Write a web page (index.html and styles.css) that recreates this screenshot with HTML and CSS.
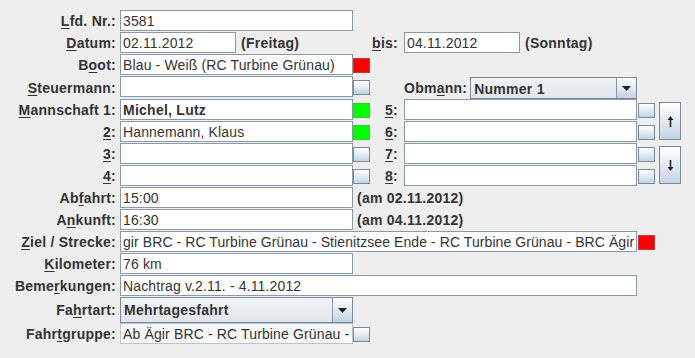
FILE: index.html
```html
<!DOCTYPE html>
<html>
<head>
    <title>Fahrt bearbeiten</title>
    <link rel="stylesheet" href="styles.css">
</head>
<body>
<div class="form">
    <!-- Lfd. Nr. -->
    <label class="lbl c-lbl"><u>L</u>fd. Nr.:</label>
    <div class="field c-main">3581</div>

    <!-- Datum / bis -->
    <label class="lbl c-lbl"><u>D</u>atum:</label>
    <div class="pair c-main">
        <div class="field short">02.11.2012</div>
        <span class="note">(Freitag)</span>
    </div>
    <label class="lbl rlbl c-rlbl"><u>b</u>is:</label>
    <div class="pair c-rest">
        <div class="field short">04.11.2012</div>
        <span class="note">(Sonntag)</span>
    </div>

    <!-- Boot -->
    <label class="lbl c-lbl">B<u>o</u>ot:</label>
    <div class="field c-main">Blau - Weiß (RC Turbine Grünau)</div>
    <span class="mark red c-ind"></span>

    <!-- Steuermann / Obmann -->
    <label class="lbl tall c-lbl"><u>S</u>teuermann:</label>
    <div class="field c-main"></div>
    <button class="sbtn c-ind"></button>
    <div class="pair c-rmain">
        <label class="lbl tall obm">Obm<u>a</u>nn:</label>
        <div class="combo small">
            <span class="combo-text">Nummer 1</span>
            <span class="combo-arrow"><svg width="9" height="5" viewBox="0 0 9 5"><path d="M0 0H9L4.5 5Z" fill="#222"/></svg></span>
        </div>
    </div>

    <!-- Mannschaft -->
    <label class="lbl c-lbl"><u>M</u>annschaft 1:</label>
    <div class="field bold c-main">Michel, Lutz</div>
    <span class="mark green c-ind"></span>
    <label class="lbl rlbl c-rlbl"><u>5</u>:</label>
    <div class="field c-rmain"></div>
    <button class="sbtn c-btn"></button>
    <button class="abtn c-arrow"><svg width="7" height="11" viewBox="0 0 7 11"><path d="M3.5 0L0.5 4H2.7V11H4.3V4H6.5Z" fill="#222"/></svg></button>

    <label class="lbl c-lbl"><u>2</u>:</label>
    <div class="field c-main">Hannemann, Klaus</div>
    <span class="mark green c-ind"></span>
    <label class="lbl rlbl c-rlbl"><u>6</u>:</label>
    <div class="field c-rmain"></div>
    <button class="sbtn c-btn"></button>

    <label class="lbl c-lbl"><u>3</u>:</label>
    <div class="field c-main"></div>
    <button class="sbtn c-ind"></button>
    <label class="lbl rlbl c-rlbl"><u>7</u>:</label>
    <div class="field c-rmain"></div>
    <button class="sbtn c-btn"></button>
    <button class="abtn c-arrow"><svg width="7" height="11" viewBox="0 0 7 11"><path d="M3.5 11L0.5 7H2.7V0H4.3V7H6.5Z" fill="#222"/></svg></button>

    <label class="lbl c-lbl"><u>4</u>:</label>
    <div class="field c-main"></div>
    <button class="sbtn c-ind"></button>
    <label class="lbl rlbl c-rlbl"><u>8</u>:</label>
    <div class="field c-rmain"></div>
    <button class="sbtn c-btn"></button>

    <!-- Zeiten -->
    <label class="lbl c-lbl">Ab<u>f</u>ahrt:</label>
    <div class="field c-main">15:00</div>
    <span class="note after c-note">(am 02.11.2012)</span>

    <label class="lbl c-lbl">A<u>n</u>kunft:</label>
    <div class="field c-main">16:30</div>
    <span class="note after c-note">(am 04.11.2012)</span>

    <!-- Strecke -->
    <label class="lbl c-lbl"><u>Z</u>iel / Strecke:</label>
    <div class="field tight c-wide">gir BRC - RC Turbine Grünau - Stienitzsee Ende - RC Turbine Grünau - BRC Ägir</div>
    <span class="mark red c-btn"></span>

    <label class="lbl c-lbl"><u>K</u>ilometer:</label>
    <div class="field c-main">76 km</div>

    <label class="lbl c-lbl">Beme<u>r</u>kungen:</label>
    <div class="field c-wide">Nachtrag v.2.11. - 4.11.2012</div>

    <label class="lbl big c-lbl">Fa<u>h</u>rtart:</label>
    <div class="combo large c-main">
        <span class="combo-text">Mehrtagesfahrt</span>
        <span class="combo-arrow"><svg width="9" height="5" viewBox="0 0 9 5"><path d="M0 0H9L4.5 5Z" fill="#222"/></svg></span>
    </div>

    <label class="lbl c-lbl">Fahr<u>t</u>gruppe:</label>
    <div class="field readonly c-main">Ab Ägir BRC - RC Turbine Grünau -</div>
    <button class="sbtn c-ind"></button>
</div>
</body>
</html>
```

FILE: styles.css
```css
body {
    margin: 0;
    background-color: #eeeeee;
    font-family: "Liberation Sans", Arial, sans-serif;
    font-size: 14px;
    letter-spacing: 0.14px;
    color: #333333;
}
.form {
    display: grid;
    grid-template-columns: 120px 233px 19px 32px 233px 22px 22px;
    grid-template-rows: repeat(3, 22px) 23px repeat(9, 22px) 26px 22px;
    padding-top: 10px;
}
.c-lbl { grid-column: 1; }
.c-main { grid-column: 2; }
.c-ind { grid-column: 3; }
.c-rlbl { grid-column: 4; }
.c-rmain { grid-column: 5; }
.c-btn { grid-column: 6; }
.c-arrow { grid-column: 7; grid-row: span 2; }
.c-rest { grid-column: 5 / 8; }
.c-wide { grid-column: 2 / 6; }
.c-note { grid-column: 3 / 8; }

.lbl {
    font-weight: bold;
    letter-spacing: 0.25px;
    text-align: right;
    padding: 3px 4px 0 0;
    line-height: 17px;
    white-space: nowrap;
}
.lbl.tall { padding-top: 4px; }
.lbl.big { padding-top: 5px; }
.rlbl { padding-right: 6px; }
.lbl u { text-decoration-thickness: 1px; text-underline-offset: 2px; }

.field {
    box-sizing: border-box;
    height: 21px;
    border: 1px solid #8a99a6;
    background-color: #fff;
    padding: 2px 2px 0;
    line-height: 17px;
    white-space: nowrap;
    overflow: hidden;
}
.field.tight { letter-spacing: 0.08px; }
.field.bold { font-weight: bold; letter-spacing: 0.25px; }
.field.short { width: 116px; }
.field.readonly {
    background-color: #f6f7f8;
    border-color: #b9c3cc;
}

.pair {
    display: flex;
    align-items: flex-start;
}
.note {
    font-weight: bold;
    letter-spacing: 0.25px;
    padding: 3px 0 0 5px;
    line-height: 17px;
    white-space: nowrap;
}
.note.after { padding-left: 4px; }
.obm { flex: 1; padding-right: 3px; }

.mark {
    box-sizing: border-box;
    width: 17px;
    height: 15px;
    align-self: center;
}
.mark.c-btn { margin-left: 1px; }
.red {
    background-color: #ff0000;
    border: 1px solid #c43a3a;
}
.green {
    background-color: #00ff00;
    border: 1px solid #2fd02f;
}

.sbtn, .abtn {
    box-sizing: border-box;
    border: 1px solid #7a8a99;
    background: linear-gradient(#ffffff, #dfe8f1 55%, #c3d3e3);
    padding: 0;
    margin: 0;
}
.sbtn {
    width: 17px;
    height: 15px;
    align-self: center;
}
.sbtn.c-btn { margin-left: 1px; }
.abtn {
    width: 22px;
    height: 38px;
    align-self: center;
    display: flex;
    align-items: center;
    justify-content: center;
}

.combo {
    box-sizing: border-box;
    display: flex;
    border: 1px solid #7a8a99;
    background: linear-gradient(#f1f4f7, #dfe5eb);
    font-weight: bold;
    letter-spacing: 0.25px;
}
.combo.small {
    width: 167px;
    height: 22px;
    margin-top: 1px;
}
.combo.large {
    height: 26px;
}
.combo-text {
    flex: 1;
    padding: 3px 0 0 3px;
    line-height: 17px;
    white-space: nowrap;
}
.combo.large .combo-text { padding-top: 4px; }
.combo-arrow {
    width: 19px;
    border-left: 1px solid #8a99a6;
    background: linear-gradient(#ffffff, #dfe8f1 55%, #c3d3e3);
    display: flex;
    align-items: center;
    justify-content: center;
}
```
